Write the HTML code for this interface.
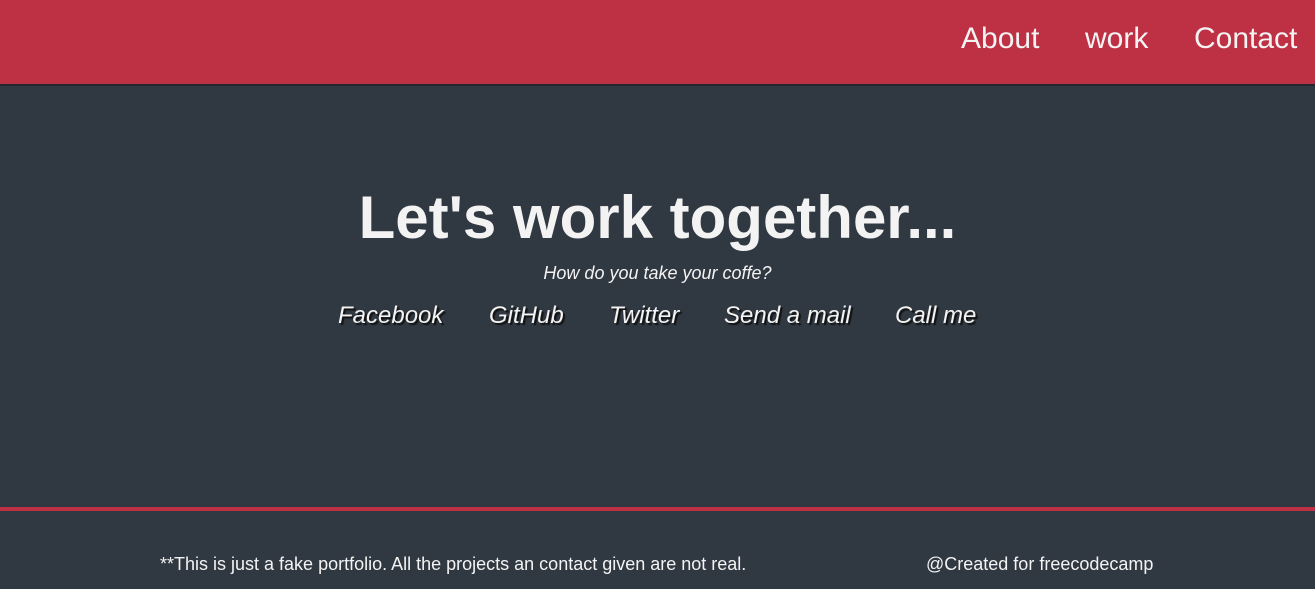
<!DOCTYPE html>
<html><head><style>
*{margin:0;padding:0;box-sizing:border-box}
body{width:1315px;height:589px;background:#303841;font-family:"Liberation Sans",Arial,sans-serif;color:#f3f3f3;position:relative;overflow:hidden}
.nav{position:absolute;top:0;left:0;width:1315px;height:86px;background:#be3144;border-bottom:2px solid #22282e}
.nav span{position:absolute;top:22px;font-size:30px;color:#f3f3f3}
h1{position:absolute;top:182px;left:0;width:1315px;text-align:center;font-size:60px;font-weight:bold;line-height:72px}
.sub{position:absolute;top:263px;left:0;width:1315px;text-align:center;font-size:18px;font-style:italic}
.links span{position:absolute;top:302px;font-size:24px;font-style:italic;text-shadow:2px 2px 1px #111}
.line{position:absolute;top:507px;left:0;width:1315px;height:4px;background:#be3144}
.f{position:absolute;top:554px;font-size:18px}
</style></head><body>
<div class="nav"><span style="left:961px">About</span><span style="left:1085px">work</span><span style="left:1194px">Contact</span></div>
<h1>Let's work together...</h1>
<div class="sub">How do you take your coffe?</div>
<div class="links"><span style="left:338px">Facebook</span><span style="left:489px">GitHub</span><span style="left:609px">Twitter</span><span style="left:724px">Send a mail</span><span style="left:895px">Call me</span></div>
<div class="line"></div>
<div class="f" style="left:160px">**This is just a fake portfolio. All the projects an contact given are not real.</div>
<div class="f" style="left:926px">@Created for freecodecamp</div>
</body></html>
